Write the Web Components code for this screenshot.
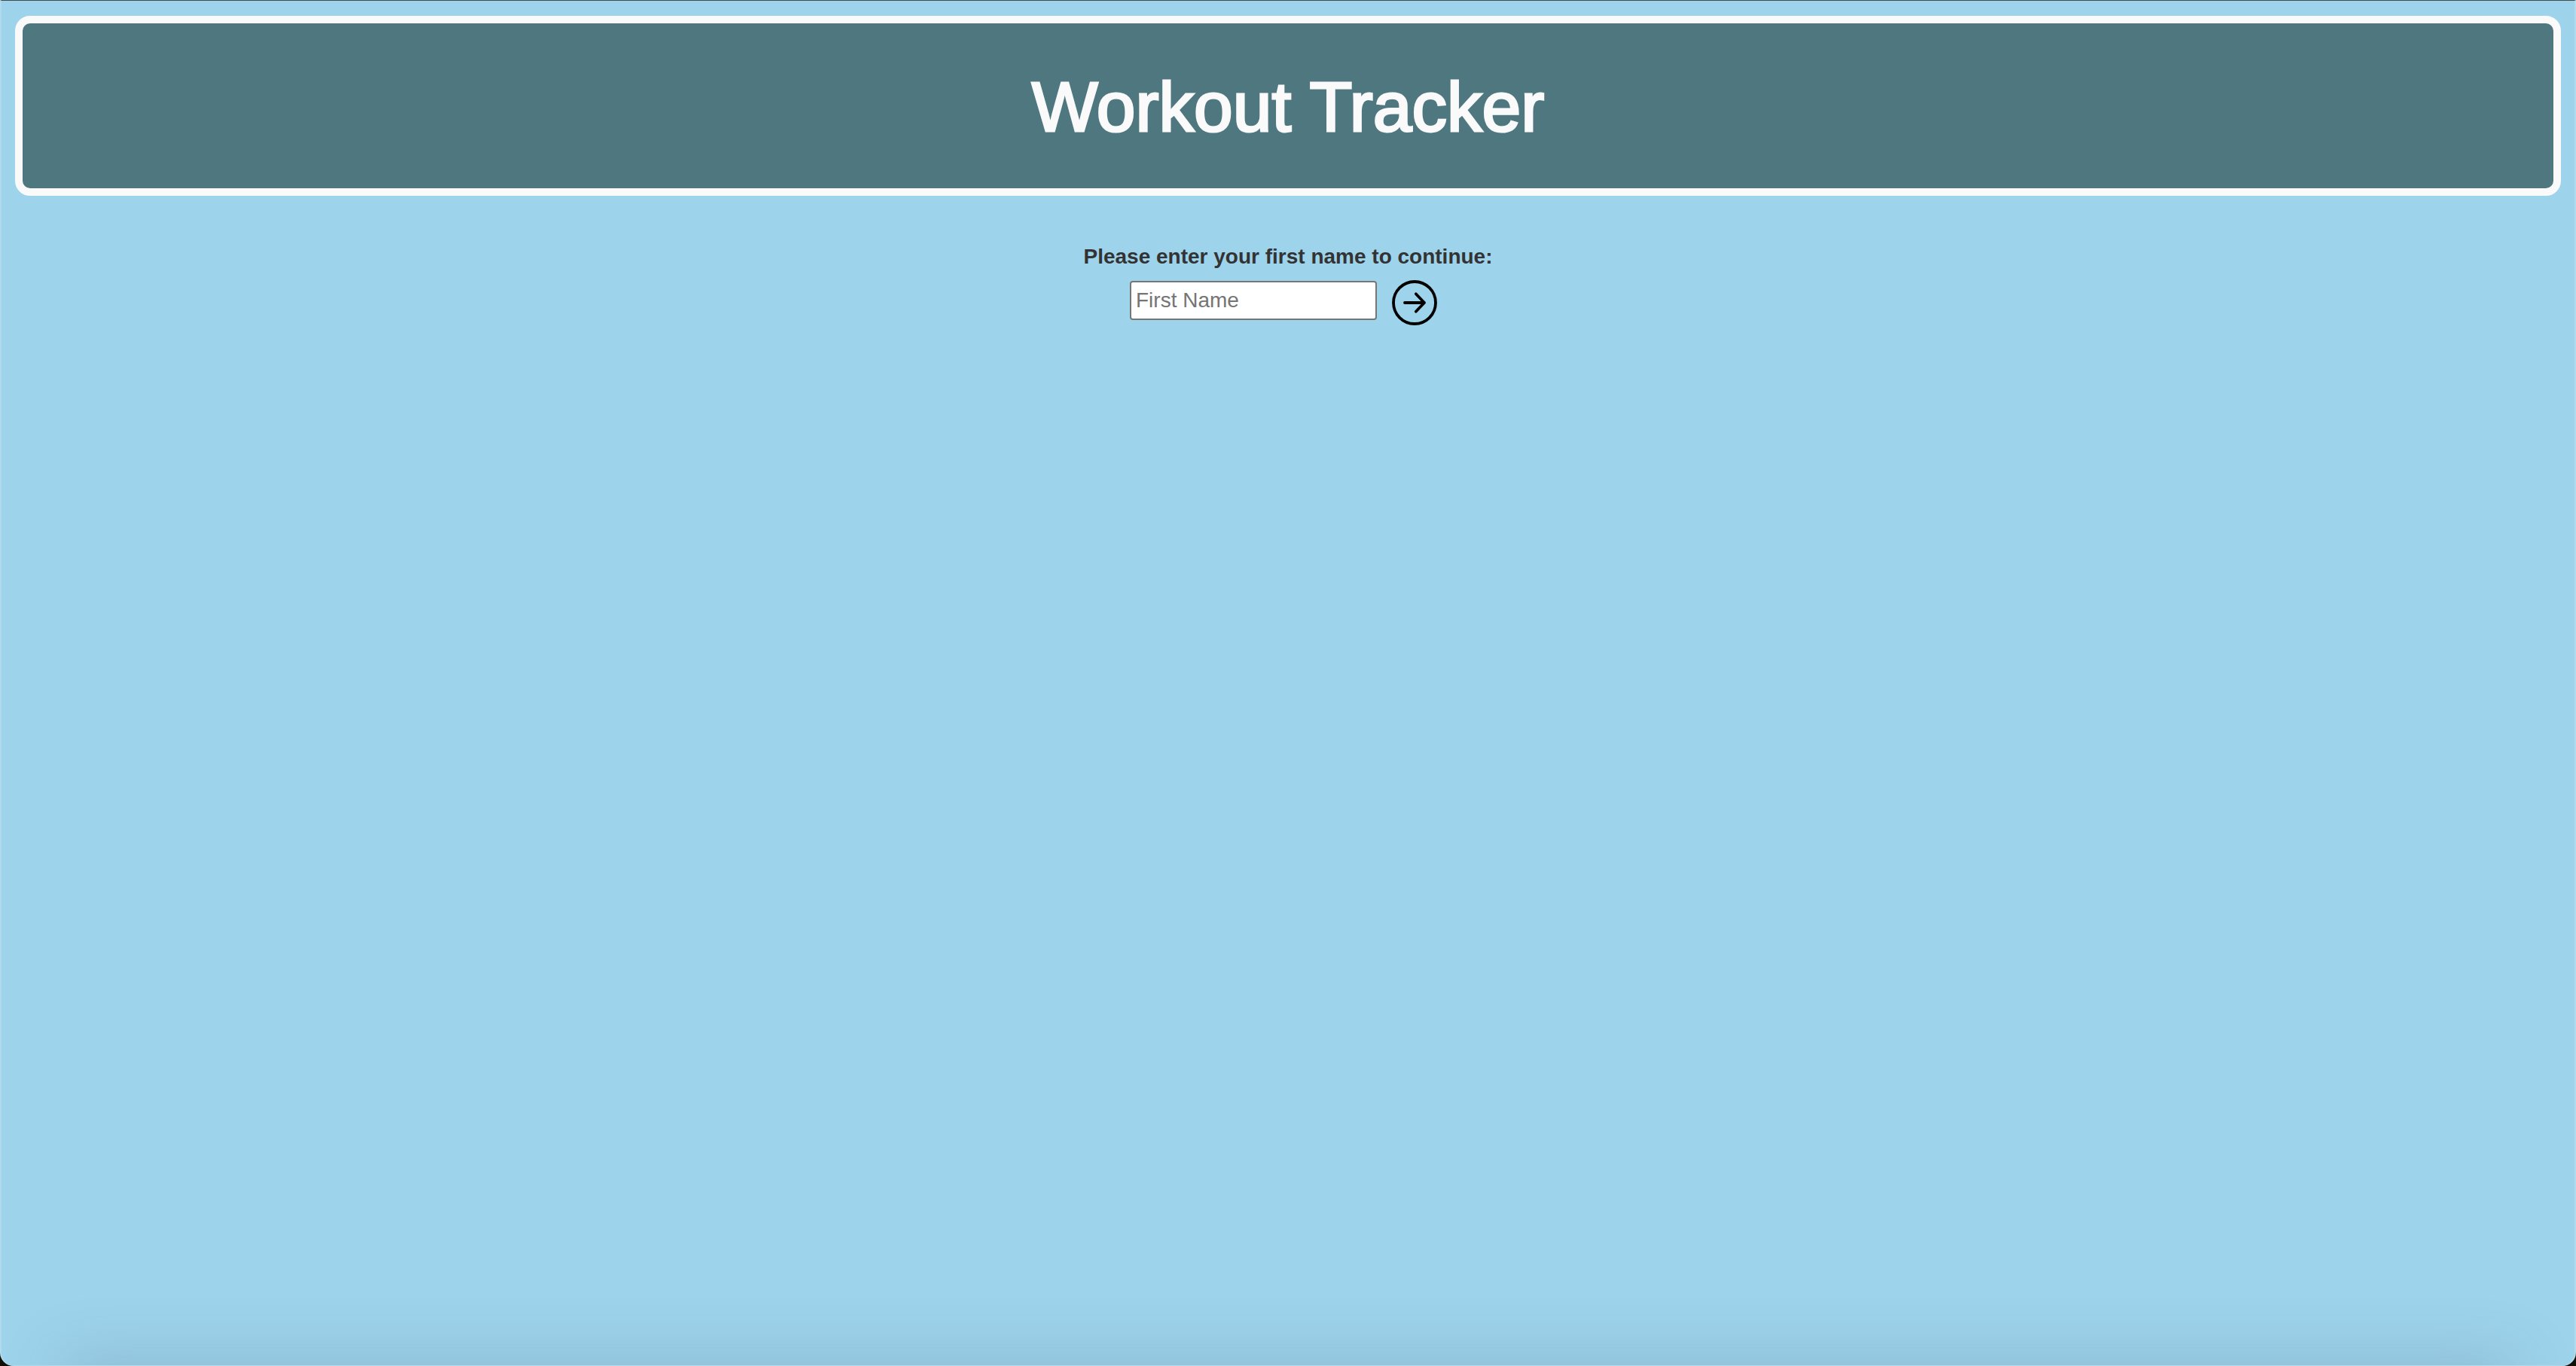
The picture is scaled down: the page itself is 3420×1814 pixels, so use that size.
<!DOCTYPE html>
<html lang="en">
<head>
<meta charset="utf-8">
<title>Workout Tracker</title>
<style>
html, body { margin: 0; height: 100%; background: #120f08; }
body { font-family: "Liberation Sans", Arial, sans-serif; font-size: 28px; color: #333; }
</style>
</head>
<body>
<app-window>
  <page-header>Workout Tracker</page-header>
  <name-form label="Please enter your first name to continue:" placeholder="First Name"></name-form>
</app-window>
<script>
class AppWindow extends HTMLElement {
  constructor() {
    super();
    this.attachShadow({ mode: "open" }).innerHTML = `
      <style>
        :host {
          display: flex; flex-direction: column; gap: 60px;
          box-sizing: border-box; min-height: 100vh; overflow: hidden;
          padding: 20px 18px;
          border: solid #b1daea; border-width: 1px 2px;
          border-top-color: #484848;
          border-radius: 0 0 18px 18px;
          background: #9dd3eb;
          position: relative;
        }
        .shade {
          position: absolute; left: 80px; right: 80px; bottom: -40px; height: 40px;
          box-shadow: 0 0 80px 2px rgba(80, 110, 130, .34);
          border-radius: 40px; pointer-events: none;
        }
      </style>
      <slot></slot><div class="shade"></div>`;
  }
}
class PageHeader extends HTMLElement {
  constructor() {
    super();
    this.attachShadow({ mode: "open" }).innerHTML = `
      <style>
        :host {
          display: block; padding: 59px 20px 56px; text-align: center;
          border: 10px solid #fafafa; border-radius: 20px;
          background: #4f7780; color: #fafafa;
        }
        h1 {
          margin: 0; font-size: 93px; line-height: 104px; font-weight: 400;
          -webkit-text-stroke: 3px currentColor;
        }
      </style>
      <h1><slot></slot></h1>`;
  }
}
class ArrowButton extends HTMLElement {
  constructor() {
    super();
    this.attachShadow({ mode: "open" }).innerHTML = `
      <style>
        :host { display: block; }
        button { display: block; padding: 0; border: 0; background: none; color: #000; cursor: pointer; }
        svg { display: block; width: 60px; height: 60px; }
      </style>
      <button type="button" aria-label="Continue">
        <svg viewBox="0 0 60 60" fill="none" stroke="currentColor" stroke-width="3.8" stroke-linecap="round" stroke-linejoin="round">
          <circle cx="30" cy="30" r="28"/>
          <path d="M17 30H43M31.8 18.3L43 30L31.8 41.7"/>
        </svg>
      </button>`;
  }
}
class NameForm extends HTMLElement {
  connectedCallback() {
    const root = this.attachShadow({ mode: "open" });
    root.innerHTML = `
      <style>
        :host { display: block; }
        form { display: flex; flex-direction: column; align-items: center; gap: 10px; }
        label { font-weight: 700; font-size: 28px; line-height: 42px; }
        .row { display: flex; align-items: center; gap: 20px; padding-right: 12px; }
        input {
          box-sizing: border-box; width: 328px; height: 52px; padding: 0 6px;
          border: 2px solid #767676; border-radius: 4px; background: #fff;
          font: inherit; color: #333; margin-bottom: 6px;
        }
        input::placeholder { color: #757575; }
      </style>
      <form>
        <label for="first-name"></label>
        <div class="row"><input id="first-name" type="text"><arrow-button></arrow-button></div>
      </form>`;
    root.querySelector("label").textContent = this.getAttribute("label");
    root.querySelector("input").placeholder = this.getAttribute("placeholder");
  }
}
customElements.define("app-window", AppWindow);
customElements.define("page-header", PageHeader);
customElements.define("arrow-button", ArrowButton);
customElements.define("name-form", NameForm);
</script>
</body>
</html>
